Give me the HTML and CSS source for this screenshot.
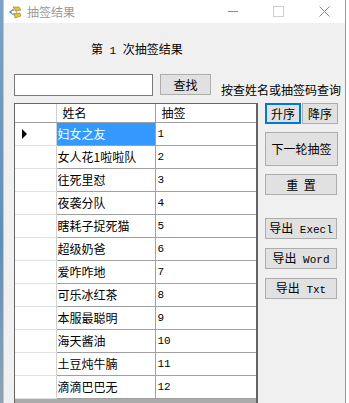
FILE: index.html
```html
<!DOCTYPE html>
<html lang="zh-CN">
<head>
  <meta charset="UTF-8">
  <title>抽签结果</title>
  <link rel="stylesheet" href="styles.css">
</head>
<body>
  <div class="desk-left"></div>
  <div class="window">
    <div class="titlebar">
      <svg class="app-icon" width="14" height="14" viewBox="0 0 14 14">
        <path d="M1 7 L5 4 L9 7 L5 10 Z" fill="#3a7fd0"/>
        <path d="M5 2 L11 2 L13 5 L8 6 Z" fill="#e8c23a" stroke="#9a7a10" stroke-width="0.6"/>
        <path d="M6 9 L12 8 L13 11 L7 13 Z" fill="#e8c23a" stroke="#9a7a10" stroke-width="0.6"/>
        <path d="M3 6 L7 5 L9 8 L4 9 Z" fill="#ffffff" stroke="#888" stroke-width="0.5"/>
      </svg>
      <span class="title">抽签结果</span>
      <div class="controls">
        <span class="ctl ctl-min"></span>
        <span class="ctl ctl-max"></span>
        <span class="ctl ctl-close">
          <svg width="11" height="11" viewBox="0 0 11 11"><path d="M0.5 0.5 L10.5 10.5 M10.5 0.5 L0.5 10.5" stroke="#888" stroke-width="1"/></svg>
        </span>
      </div>
    </div>

    <div class="client">
      <div class="heading">第<span class="lat"> 1 </span>次抽签结果</div>

      <div class="search-row">
        <input type="text" class="search-input">
        <button class="btn btn-find">查找</button>
        <span class="hint">按查姓名或抽签码查询</span>
      </div>

      <div class="main">
        <div class="grid">
          <table>
            <thead>
              <tr>
                <th class="rh"></th>
                <th class="col-name">姓名</th>
                <th class="col-num">抽签</th>
              </tr>
            </thead>
            <tbody>
              <tr><td class="rh"><span class="arrow"></span></td><td class="name selected">妇女之友</td><td class="num">1</td></tr>
              <tr><td class="rh"></td><td class="name">女人花1啦啦队</td><td class="num">2</td></tr>
              <tr><td class="rh"></td><td class="name">往死里怼</td><td class="num">3</td></tr>
              <tr><td class="rh"></td><td class="name">夜袭分队</td><td class="num">4</td></tr>
              <tr><td class="rh"></td><td class="name">瞎耗子捉死猫</td><td class="num">5</td></tr>
              <tr><td class="rh"></td><td class="name">超级奶爸</td><td class="num">6</td></tr>
              <tr><td class="rh"></td><td class="name">爱咋咋地</td><td class="num">7</td></tr>
              <tr><td class="rh"></td><td class="name">可乐冰红茶</td><td class="num">8</td></tr>
              <tr><td class="rh"></td><td class="name">本服最聪明</td><td class="num">9</td></tr>
              <tr><td class="rh"></td><td class="name">海天酱油</td><td class="num">10</td></tr>
              <tr><td class="rh"></td><td class="name">土豆炖牛腩</td><td class="num">11</td></tr>
              <tr><td class="rh"></td><td class="name">滴滴巴巴无</td><td class="num">12</td></tr>
            </tbody>
          </table>
        </div>

        <div class="side">
          <div class="sort-row">
            <button class="btn btn-sort focused">升序</button>
            <button class="btn btn-sort">降序</button>
          </div>
          <button class="btn btn-next">下一轮抽签</button>
          <button class="btn btn-wide btn-reset">重&nbsp;&nbsp;置</button>
          <button class="btn btn-wide btn-export">导出<span class="lat"> Execl</span></button>
          <button class="btn btn-wide btn-export2">导出<span class="lat"> Word</span></button>
          <button class="btn btn-wide btn-export2">导出<span class="lat"> Txt</span></button>
        </div>
      </div>
    </div>
  </div>
  <div class="desk-right"></div>
</body>
</html>
```

FILE: styles.css
```css
body {
  margin: 0;
  padding: 0;
  display: flex;
  height: 403px;
  overflow: hidden;
  font-family: "Noto Sans CJK SC", "Liberation Sans", sans-serif;
  font-size: 12px;
  color: #000;
  background: #fff;
}
.desk-left {
  width: 3px;
  background: linear-gradient(#7aa3c4, #5f8fb8 60%, #8ea3b3);
}
.window {
  width: 341px;
  border-left: 1px solid #c4c4c4;
  border-right: 1px solid #9a9a9a;
  display: flex;
  flex-direction: column;
  background: #f0f0f0;
}
.desk-right {
  flex: 1;
  background: #fff;
}

/* title bar */
.titlebar {
  height: 23px;
  background: #fff;
  display: flex;
  align-items: center;
  flex-shrink: 0;
}
.app-icon {
  margin-left: 4px;
}
.title {
  margin-left: 5px;
  color: #999;
  font-size: 12px;
  line-height: 14px;
}
.controls {
  margin-left: auto;
  display: flex;
  align-items: center;
}
.ctl {
  display: block;
  position: relative;
}
.ctl-min {
  width: 10px;
  height: 1px;
  background: #8a8a8a;
  margin-right: 35px;
}
.ctl-max {
  width: 9px;
  height: 9px;
  border: 1px solid #cfcfcf;
  margin-right: 35px;
}
.ctl-close {
  width: 11px;
  height: 11px;
  margin-right: 15px;
}
.ctl-close svg {
  display: block;
}

/* client area */
.client {
  flex: 1;
  padding-left: 10px;
  display: flex;
  flex-direction: column;
}
.heading {
  margin-top: 18px;
  padding-left: 77px;
  height: 16px;
  line-height: 16px;
  font-size: 12px;
}
.lat {
  font-family: "Liberation Mono", "DejaVu Sans Mono", monospace;
  font-size: 11px;
  white-space: pre;
}
.search-row {
  display: flex;
  align-items: flex-start;
  margin-top: 17px;
  height: 22px;
}
.search-input {
  width: 139px;
  height: 22px;
  box-sizing: border-box;
  border: 1px solid #7a7a7a;
  margin: 0;
  padding: 0 2px;
  background: #fff;
}
.btn {
  font-family: "Noto Sans CJK SC", "Liberation Sans", sans-serif;
  font-size: 12px;
  background: #e1e1e1;
  border: 1px solid #adadad;
  border-radius: 0;
  padding: 0;
  margin: 0;
  box-sizing: border-box;
  color: #000;
  line-height: 14px;
}
.btn-find {
  margin-left: 7px;
  width: 51px;
  height: 21px;
}
.hint {
  margin-left: 10px;
  margin-top: 9px;
  line-height: 14px;
  white-space: nowrap;
}

/* main area */
.main {
  display: flex;
  margin-top: 7px;
  flex: 1;
  min-height: 0;
}
.grid {
  width: 244px;
  box-sizing: border-box;
  border: 1px solid #646464;
  border-right-width: 2px;
  border-bottom: none;
  background: #ababab;
  overflow: hidden;
}
.grid table {
  border-collapse: collapse;
  width: 100%;
  table-layout: fixed;
  background: #fff;
}
.grid th,
.grid td {
  padding: 0;
  height: 23px;
  box-sizing: border-box;
  border-bottom: 1px solid #a0a0a0;
  border-right: 1px solid #a0a0a0;
  font-weight: normal;
  text-align: left;
  white-space: nowrap;
  overflow: hidden;
  line-height: 14px;
}
.grid th {
  height: 18px;
}
.grid .rh {
  width: 41px;
  border-bottom-color: #e3e3e3;
  border-right-color: #d0d0d0;
  position: relative;
}
.grid th.rh {
  border-bottom-color: #a0a0a0;
}
.grid .col-name {
  width: 99px;
  padding-left: 6px;
}
.grid .col-num {
  padding-left: 6px;
  border-right: none;
}
.grid td.name {
  padding-left: 1px;
}
.grid td.num {
  padding-left: 2px;
  border-right: none;
  font-family: "Liberation Mono", "DejaVu Sans Mono", monospace;
  font-size: 11px;
}
.grid td.selected {
  background: #3399ff;
  color: #fff;
}
.arrow {
  position: absolute;
  left: 7px;
  top: 6px;
  width: 0;
  height: 0;
  border-top: 5px solid transparent;
  border-bottom: 5px solid transparent;
  border-left: 5px solid #000;
}

/* side buttons */
.side {
  margin-left: 7px;
  width: 73px;
  display: flex;
  flex-direction: column;
}
.sort-row {
  display: flex;
  gap: 1px;
}
.btn-sort {
  width: 36px;
  height: 21px;
}
.btn-sort.focused {
  border: 2px solid #0078d7;
}
.btn-next {
  margin-top: 8px;
  width: 73px;
  height: 34px;
}
.btn-wide {
  width: 72px;
  height: 21px;
}
.btn-reset {
  margin-top: 8px;
}
.btn-export {
  margin-top: 23px;
}
.btn-export2 {
  margin-top: 9px;
}
```
